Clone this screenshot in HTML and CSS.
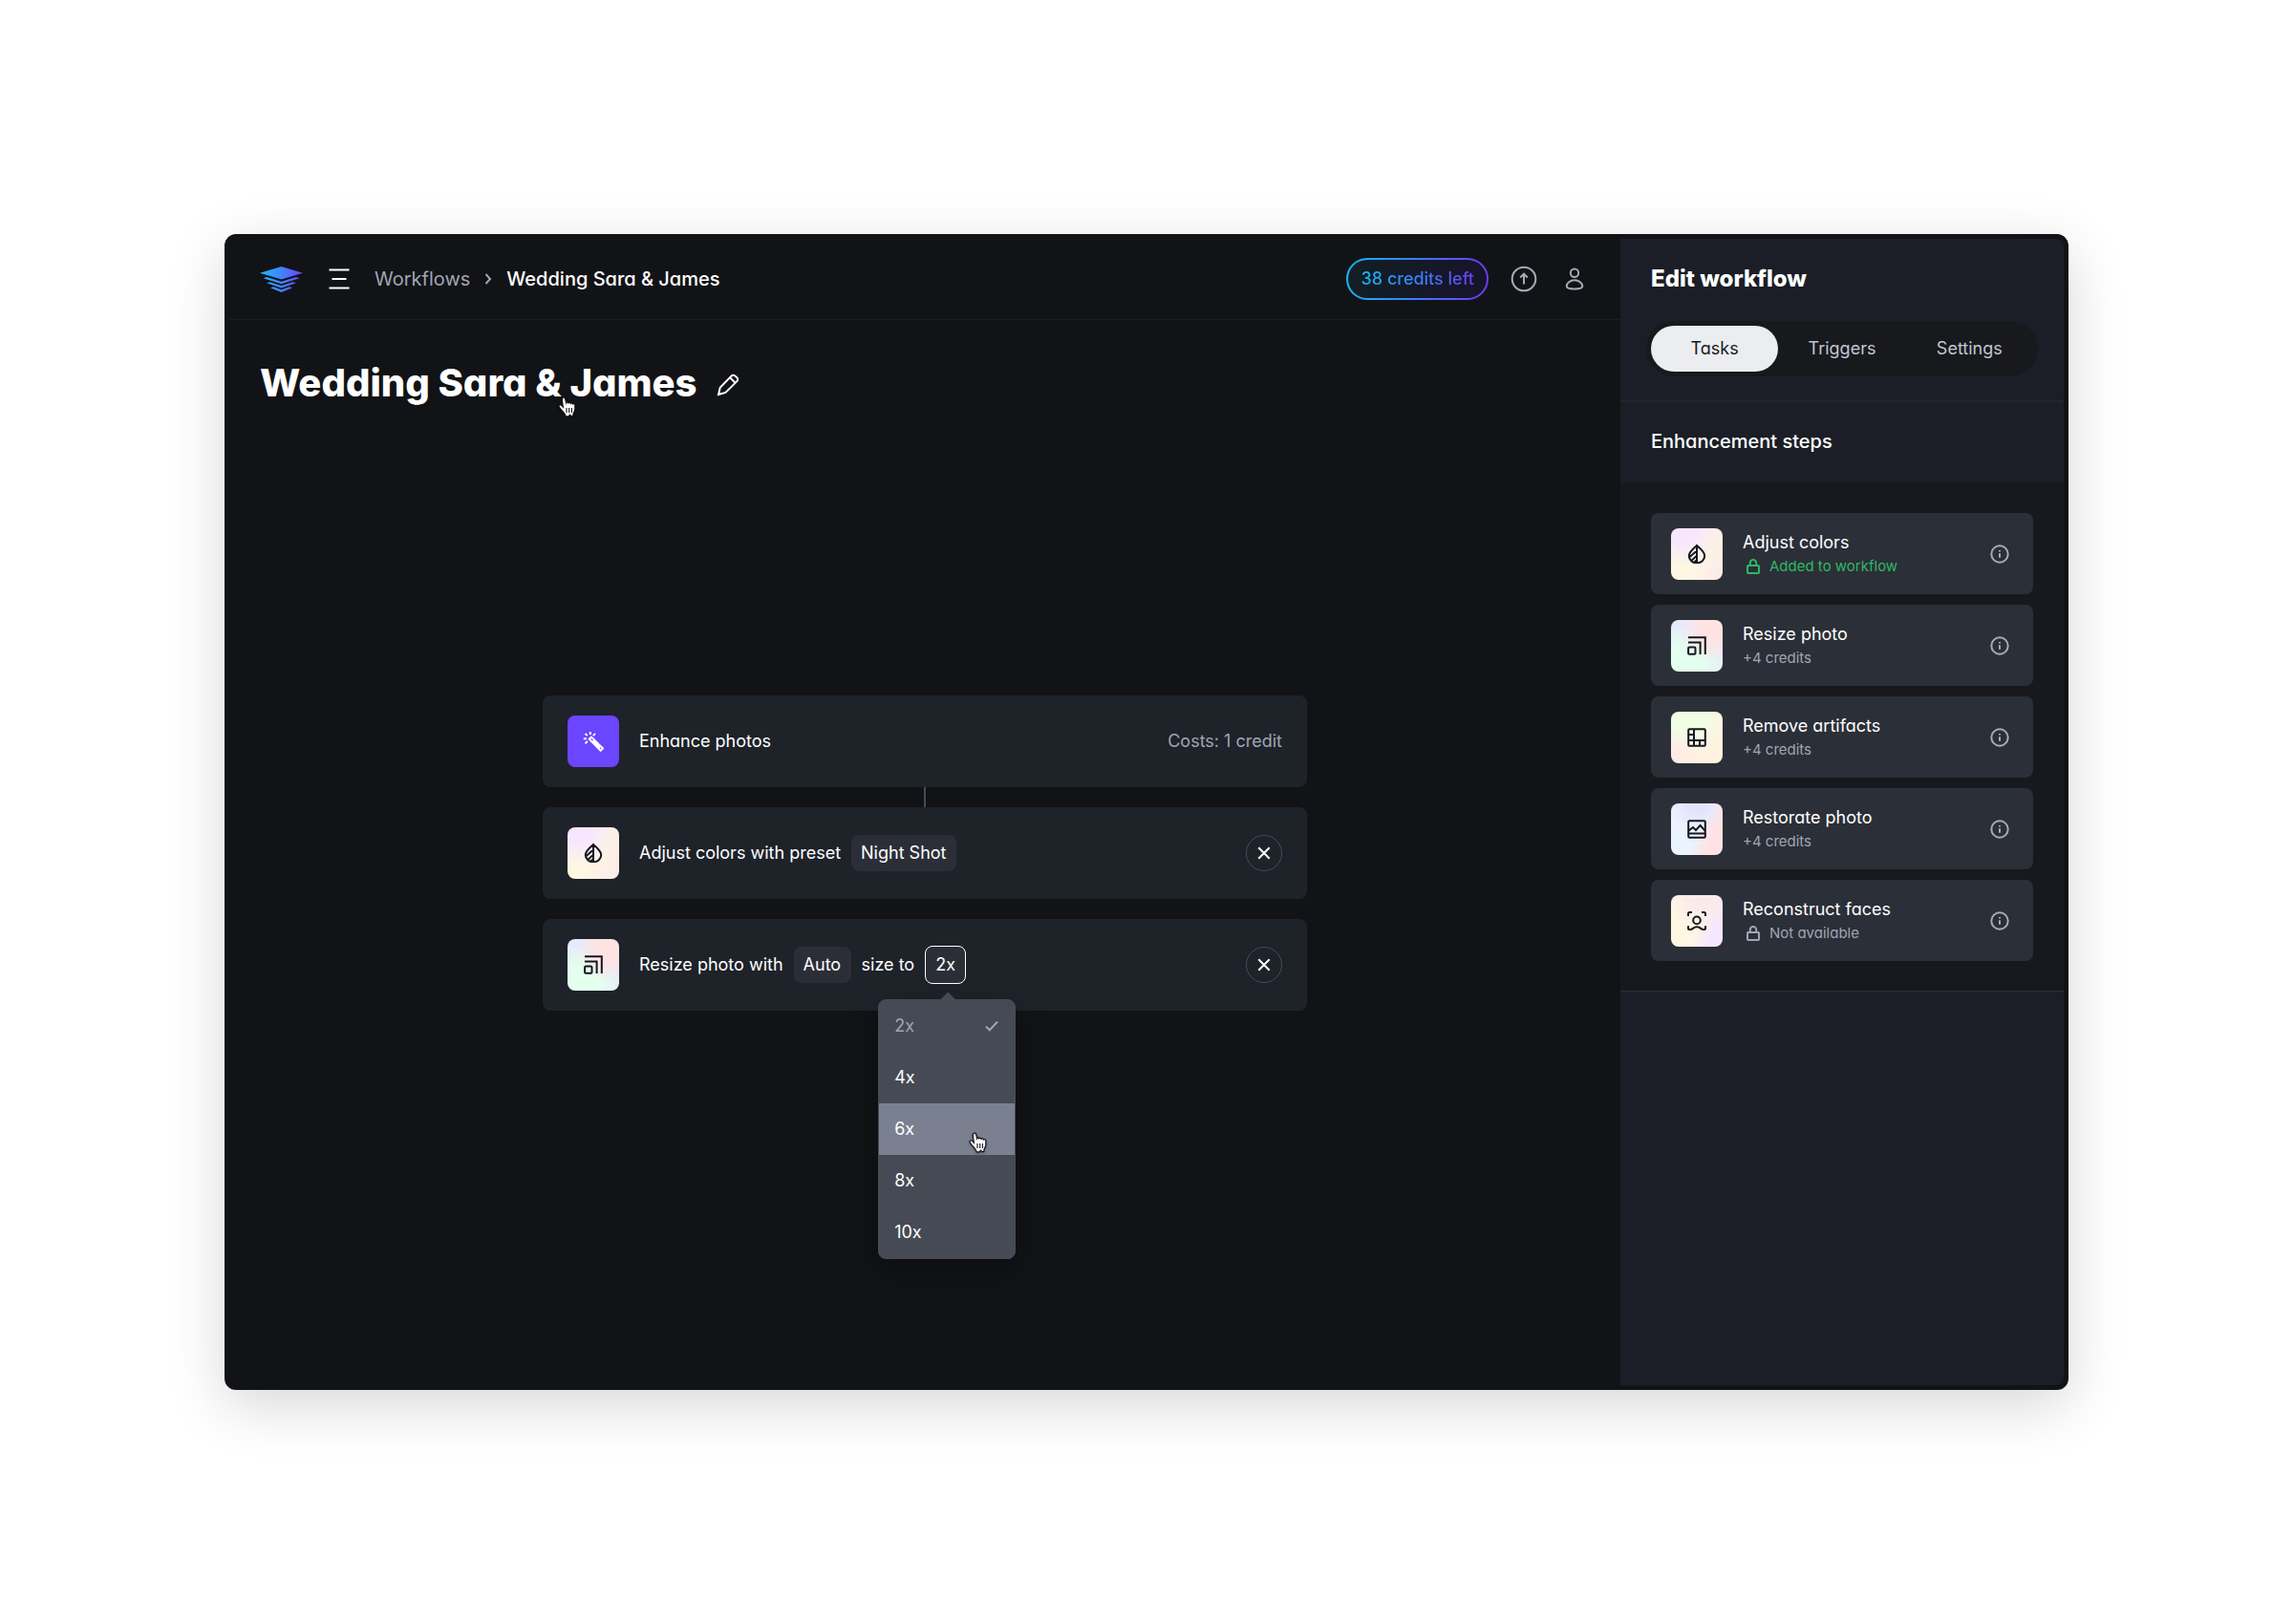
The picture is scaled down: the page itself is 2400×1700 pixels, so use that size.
FILE: index.html
```html
<!DOCTYPE html>
<html lang="en">
<head>
<meta charset="utf-8">
<title>Wedding Sara &amp; James – Workflows</title>
<link rel="stylesheet" href="styles.css">
</head>
<body>
<svg class="sprite" aria-hidden="true">
  <defs>
    <linearGradient id="brand" x1="0" y1="0" x2="1" y2="0">
      <stop offset="0" stop-color="#17b9fb"/><stop offset=".5" stop-color="#4184ff"/><stop offset="1" stop-color="#7040f8"/>
    </linearGradient>
  </defs>
  <symbol id="i-drop" viewBox="0 0 20 20">
    <path d="M10 .8C7.6 3.6 1.8 7 1.8 12a8.2 7.4 0 0 0 16.400 0C18.200 7 12.400 3.600 10 .8ZM10 1v18.200M2.600 13 10 6.600M4.200 16.900 10 11.800M7 18.800l3-2.500"/>
  </symbol>
  <symbol id="i-resize" viewBox="0 0 20 20">
    <path d="M1 1.200h17.800V19M1 6.400h12.600V19"/><rect x="1.100" y="11.600" width="7.400" height="7.200" rx="1"/>
  </symbol>
  <symbol id="i-grid" viewBox="0 0 20 20">
    <rect x="1.200" y="1.200" width="17.600" height="17.600" rx="1"/><path d="M7 1v18M1 13h18M1 7h6M13 13v6"/>
  </symbol>
  <symbol id="i-image" viewBox="0 0 20 20">
    <rect x="1.200" y="1.200" width="17.600" height="17.600" rx="1"/><path d="M1 14.400h18M1.400 11.600 6 8l3 3 4.600-5 5 5.600"/>
  </symbol>
  <symbol id="i-face" viewBox="0 0 20 20">
    <circle cx="10" cy="9.400" r="3.800"/><path d="M1 5V2.500A1.500 1.500 0 0 1 2.500 1H5M15 1h2.500A1.500 1.500 0 0 1 19 2.500V5M1 15.200V18a1 1 0 0 0 1 1h1.500c2 0 3.200-2.800 6.500-2.800s4.500 2.800 6.500 2.800H18a1 1 0 0 0 1-1v-2.800"/>
  </symbol>
  <symbol id="i-wand" viewBox="0 0 22 22">
    <path d="M6.800 8.800 9 6.600 21 18.400 18.600 20.800ZM10.500 10.400l7.600 7.600M7.800 1v3M2.600 2.900l2.100 2.200M.8 8.200h3M13 2.900l-2.200 2.200M2.600 13.200l2.200-2.200"/>
  </symbol>
  <symbol id="i-lock" viewBox="0 0 14 16">
    <rect x="1" y="7" width="12" height="8" rx=".8"/><path d="M3.800 7V4.200a3.200 3.200 0 0 1 6.400 0V7"/>
  </symbol>
  <symbol id="i-info" viewBox="0 0 20 20">
    <circle cx="10" cy="10" r="8.700"/><path d="M10 9.200v4.600M10 6v1.600"/>
  </symbol>
  <symbol id="i-close" viewBox="0 0 14 14"><path d="m1.300 1.300 11.400 11.400M12.700 1.300 1.300 12.700"/></symbol>
  <symbol id="i-hand" viewBox="0 0 20 22">
    <path d="M5.700 1.100c1-.3 1.700.4 1.900 1.300l1 4.300c.3-1 2-1 2.300.1.500-.8 2-.6 2.300.5.600-.7 2-.4 2.300.6.700-.5 2.200-.1 2.300 1 .2 2.500.3 4.600-.4 6.300-.5 1.200-1.600 2.300-1.700 5.300l-1.800.2-1.300-1.500-1.600 1.700H8.200c-.5-2.600-1.800-3.700-3.200-5.200C3.700 14.400 2.400 12.600 1.300 11c-.5-.9-.3-1.700.4-2 1-.5 1.900.1 3 1.300l.6.700-1-7.600c-.1-1 .5-2 1.400-2.300Z" fill="#fff" stroke="#111" stroke-width="1.200"/>
    <path d="M9 12v5M11.700 12v5M14.400 12v5" stroke="#111" stroke-width="1.100" fill="none"/>
  </symbol>
</svg>

<div class="window">
  <div class="workspace">
    <header class="topbar">
      <a class="logo" href="#" aria-label="Home">
        <svg width="46" height="28" viewBox="0 0 46 28" fill="url(#brand)"><path d="M0 6.700 22.500 0 45 6.700 22.500 13.600ZM3.500 12.300 7 11 22.500 15.800 38 11 41.500 12.300 22.500 18.200ZM7 17.300 10.500 16.200 22.500 20 34.500 16.200 38 17.300 22.500 22.400ZM11 22.300 14.300 21.300 22.500 24.200 30.700 21.300 34 22.300 22.500 27Z"/></svg>
      </a>
      <button class="icon-button menu" aria-label="Menu">
        <svg width="22" height="22" viewBox="0 0 22 22"><path d="M.5 1.600h21M3.500 11h15M.5 20.400h21"/></svg>
      </button>
      <nav class="crumbs" aria-label="Breadcrumb">
        <a href="#">Workflows</a>
        <svg width="8" height="12" viewBox="0 0 8 12"><path d="m1.500 1 4.500 5-4.500 5"/></svg>
        <span aria-current="page">Wedding Sara &amp; James</span>
      </nav>
      <div class="actions">
        <a class="credits" href="#"><span>38 credits left</span></a>
        <button class="icon-button" aria-label="Upload">
          <svg width="28" height="28" viewBox="0 0 28 28"><circle cx="14" cy="14" r="12.300"/><path d="M14 19.500V9M10.200 12.500 14 8.700l3.800 3.800"/></svg>
        </button>
        <button class="icon-button account" aria-label="Account">
          <svg width="20" height="24" viewBox="0 0 20 24"><circle cx="10" cy="5.800" r="4.200"/><path d="M10 13.200c-4.600 0-8.300 3.400-8.300 6.400 0 1.900 3.400 2.900 8.300 2.900s8.300-1 8.300-2.900c0-3-3.700-6.400-8.300-6.400Z"/></svg>
        </button>
      </div>
    </header>

    <main class="canvas">
      <div class="heading">
        <h1>Wedding Sara &amp; James<svg class="cursor cursor-title" width="20" height="22"><use href="#i-hand"/></svg></h1>
        <button class="icon-button edit" aria-label="Rename workflow">
          <svg width="24" height="24" viewBox="0 0 24 24"><path d="M2 22l1.700-7.300L15.500 2.600a2.600 2.600 0 0 1 3.800-.2l2 1.800a2.600 2.600 0 0 1 .2 3.700L9.400 19.900ZM14 4.300l5.600 5.400"/></svg>
        </button>
      </div>

      <div class="flow">
        <section class="step">
          <span class="tile tile-enhance"><svg width="22" height="22"><use href="#i-wand"/></svg></span>
          <span>Enhance photos</span>
          <span class="cost">Costs: 1 credit</span>
        </section>
        <div class="connector"></div>
        <section class="step">
          <span class="tile tile-colors"><svg width="20" height="20"><use href="#i-drop"/></svg></span>
          <div class="sentence">
            <label for="preset">Adjust colors with preset</label>
            <select class="chip" id="preset"><option>Night Shot</option></select>
          </div>
          <button class="remove" aria-label="Remove step"><svg width="14" height="14"><use href="#i-close"/></svg></button>
        </section>
        <section class="step step-last">
          <span class="tile tile-resize"><svg width="20" height="20"><use href="#i-resize"/></svg></span>
          <div class="sentence">
            <label for="mode">Resize photo with</label>
            <select class="chip" id="mode"><option>Auto</option></select>
            <label for="scale">size to</label>
            <div class="picker">
              <select class="chip chip-open" id="scale"><option>2x</option></select>
              <div class="popover" role="listbox" aria-label="Scale">
                <button class="option option-current" role="option" aria-selected="true">2x
                  <svg width="14" height="12" viewBox="0 0 14 12"><path d="m1 6.500 3.800 3.700L13 1.500"/></svg>
                </button>
                <button class="option" role="option">4x</button>
                <button class="option option-hover" role="option">6x<svg class="cursor cursor-option" width="20" height="22"><use href="#i-hand"/></svg></button>
                <button class="option" role="option">8x</button>
                <button class="option" role="option">10x</button>
              </div>
            </div>
          </div>
          <button class="remove" aria-label="Remove step"><svg width="14" height="14"><use href="#i-close"/></svg></button>
        </section>
      </div>
    </main>
  </div>

  <aside class="sidebar">
    <div class="sidebar-head">
      <h2>Edit workflow</h2>
      <div class="tabs" role="tablist">
        <button class="tab tab-active" role="tab" aria-selected="true">Tasks</button>
        <button class="tab" role="tab">Triggers</button>
        <button class="tab" role="tab">Settings</button>
      </div>
    </div>
    <h3>Enhancement steps</h3>
    <ul class="tasks">
      <li class="task">
        <span class="tile tile-colors"><svg width="20" height="20"><use href="#i-drop"/></svg></span>
        <div class="task-text"><strong>Adjust colors</strong><span class="note note-added"><svg width="14" height="16"><use href="#i-lock"/></svg>Added to workflow</span></div>
        <button class="icon-button" aria-label="About Adjust colors"><svg width="20" height="20"><use href="#i-info"/></svg></button>
      </li>
      <li class="task">
        <span class="tile tile-resize"><svg width="20" height="20"><use href="#i-resize"/></svg></span>
        <div class="task-text"><strong>Resize photo</strong><span class="note">+4 credits</span></div>
        <button class="icon-button" aria-label="About Resize photo"><svg width="20" height="20"><use href="#i-info"/></svg></button>
      </li>
      <li class="task">
        <span class="tile tile-artifacts"><svg width="20" height="20"><use href="#i-grid"/></svg></span>
        <div class="task-text"><strong>Remove artifacts</strong><span class="note">+4 credits</span></div>
        <button class="icon-button" aria-label="About Remove artifacts"><svg width="20" height="20"><use href="#i-info"/></svg></button>
      </li>
      <li class="task">
        <span class="tile tile-restore"><svg width="20" height="20"><use href="#i-image"/></svg></span>
        <div class="task-text"><strong>Restorate photo</strong><span class="note">+4 credits</span></div>
        <button class="icon-button" aria-label="About Restorate photo"><svg width="20" height="20"><use href="#i-info"/></svg></button>
      </li>
      <li class="task">
        <span class="tile tile-faces"><svg width="20" height="20"><use href="#i-face"/></svg></span>
        <div class="task-text"><strong>Reconstruct faces</strong><span class="note note-locked"><svg width="14" height="16"><use href="#i-lock"/></svg>Not available</span></div>
        <button class="icon-button" aria-label="About Reconstruct faces"><svg width="20" height="20"><use href="#i-info"/></svg></button>
      </li>
    </ul>
  </aside>
</div>
</body>
</html>
```
FILE: styles.css
```css
* { box-sizing: border-box; }

body {
  margin: 0;
  min-height: 100vh;
  padding: 245px 235px;
  display: flex;
  background: #fff;
  color: #fff;
  font: 400 18px/26px Inter, "Liberation Sans", sans-serif;
  font-feature-settings: "cv11";
}

h1, h2, h3, ul { margin: 0; padding: 0; }
ul { list-style: none; }
a { color: inherit; text-decoration: none; }
button, select { font: inherit; font-feature-settings: inherit; color: inherit; border: 0; padding: 0; background: none; }
svg { display: block; flex: none; fill: none; stroke: currentColor; stroke-width: 2; }
.sprite { position: absolute; width: 0; height: 0; }

.window {
  flex: 1;
  display: flex;
  border: 5px solid #121316;
  border-radius: 12px;
  background: #121316;
  box-shadow: 0 16px 60px rgba(0, 0, 0, .16);
}

.workspace { flex: 1; display: flex; flex-direction: column; min-width: 0; }

/* Top bar */
.topbar {
  display: flex;
  align-items: center;
  height: 85px;
  padding: 0 38px 0 32px;
  border-bottom: 1px solid #1e2025;
}
.logo { margin-top: 2px; }
.logo svg { fill: url(#brand); stroke: none; }
.menu { margin-left: 26px; }
.icon-button { display: flex; color: #a6abb9; }
.menu, .edit { color: #fff; }
.crumbs { display: flex; align-items: center; gap: 15px; margin-left: 26px; font-size: 20px; color: #a0a5b5; }
.crumbs span { color: #fff; font-weight: 500; }
.actions { display: flex; align-items: center; gap: 23px; margin-left: auto; }
.credits {
  display: flex;
  align-items: center;
  height: 44px;
  padding: 0 13px;
  border: 2px solid transparent;
  border-radius: 22px;
  background:
    linear-gradient(90deg, #121e24, #17142a) padding-box,
    linear-gradient(90deg, #15b8f5, #3f7bff 50%, #6b3df0) border-box;
  font-weight: 500;
}
.credits span { background: linear-gradient(90deg, #15b8f5, #3f7bff 55%, #6b3df0); background-clip: text; color: transparent; }
.account { margin-left: 6px; }

/* Canvas */
.canvas { flex: 1; display: grid; grid-template-columns: 1fr; grid-template-rows: 1fr; }
.heading { grid-area: 1 / 1; align-self: start; display: flex; align-items: center; gap: 20px; padding: 38px 32px; }
h1 { position: relative; font-size: 40px; line-height: 56px; font-weight: 800; }
.edit { margin-top: 4px; }
.cursor { position: absolute; stroke: none; filter: drop-shadow(0 1px 1px rgba(0, 0, 0, .4)); }
.cursor-title { left: 312px; top: 42px; }

.flow { grid-area: 1 / 1; place-self: center; width: 800px; }
.step { display: flex; align-items: center; height: 96px; padding: 0 26px; gap: 21px; border-radius: 8px; background: #1e2229; }
.step-last { margin-top: 21px; }
.connector { width: 2px; height: 21px; margin: 0 auto; background: #484b56; }
.cost { margin-left: auto; color: #a0a5b5; }
.sentence { display: flex; align-items: center; gap: 11px; }
.chip { appearance: none; height: 38px; padding: 0 10px; border-radius: 8px; background: #2b2e37; }
.picker { position: relative; }
.chip-open { display: block; height: 40px; border: 1px solid #fff; outline: 0; }
.remove {
  display: grid;
  place-items: center;
  width: 38px;
  height: 38px;
  margin-left: auto;
  border: 1px solid #474a54;
  border-radius: 50%;
}

.tile { display: grid; place-items: center; flex: none; width: 54px; height: 54px; border-radius: 8px; color: #14181f; }
.tile-enhance { background: #6b45ff; color: #fff; }
.tile-colors { background: radial-gradient(circle at 20% 0, #f6e6ff 20%, transparent 60%), linear-gradient(110deg, #fff7e2 45%, #fbeaea); }
.tile-resize { background: radial-gradient(circle at 80% 20%, #ffe3e3 20%, transparent 55%), radial-gradient(circle at 20% 100%, #e3ffee 35%, transparent 75%), #e8e8ff; }
.tile-artifacts { background: radial-gradient(circle at 30% 0, #f0ffe4 25%, transparent 65%), linear-gradient(110deg, #ffe9e6 20%, #fff3e0 70%); }
.tile-restore { background: radial-gradient(circle at 50% 0, #e5e2fb 15%, transparent 50%), linear-gradient(110deg, #ebf3ff 50%, #ffe3e4 75%); }
.tile-faces { background: radial-gradient(circle at 60% 0, #fbeaea 20%, transparent 60%), linear-gradient(110deg, #fff7e2 50%, #f5e6ff 80%); }

/* Scale menu */
.popover {
  position: absolute;
  top: 56px;
  left: -49px;
  width: 144px;
  border: 1px solid #484b56;
  border-radius: 8px;
  background: #464a54;
  box-shadow: 0 12px 32px rgba(0, 0, 0, .3);
}
.popover::before {
  content: "";
  position: absolute;
  top: -8px;
  left: 64px;
  width: 16px;
  height: 8px;
  background: #464a54;
  clip-path: polygon(50% 0, 100% 100%, 0 100%);
}
.option { position: relative; display: flex; align-items: center; justify-content: space-between; width: 100%; height: 54px; padding: 0 17px 0 16px; }
.option-current { color: #a0a5b5; }
.option-hover { background: #7a8090; }
.cursor-option { left: 94px; top: 30px; }

/* Sidebar */
.sidebar { width: 464px; background: #1b1e26; border-radius: 0 8px 8px 0; }
.sidebar-head { padding: 26px 27px 25px; border-bottom: 2px solid #24272e; }
h2 { padding-left: 5px; font-size: 24px; line-height: 32px; font-weight: 800; }
.tabs { display: flex; margin-top: 28px; padding: 5px; border-radius: 29px; background: #18191d; }
.tab { flex: 1; height: 48px; border-radius: 24px; color: #c3c6d0; }
.tab-active { background: #ecedf1; color: #17191e; }
h3 { padding: 27px 32px 29px; font-size: 20px; line-height: 28px; font-weight: 500; }
.tasks { display: flex; flex-direction: column; gap: 11px; padding: 32px 32px 31px; background: #18191e; border-bottom: 1px solid #2b2e35; }
.task { display: flex; align-items: center; gap: 21px; height: 85px; padding: 0 25px 0 21px; border-radius: 8px; background: #2b2f37; }
.task-text { display: flex; flex-direction: column; margin-right: auto; }
.task-text strong { font-weight: 400; }
.note { display: flex; align-items: center; gap: 10px; font-size: 15px; line-height: 24px; color: #a0a5b5; }
.note svg { margin-left: 4px; }
.note-added { color: #2fb865; }
```
